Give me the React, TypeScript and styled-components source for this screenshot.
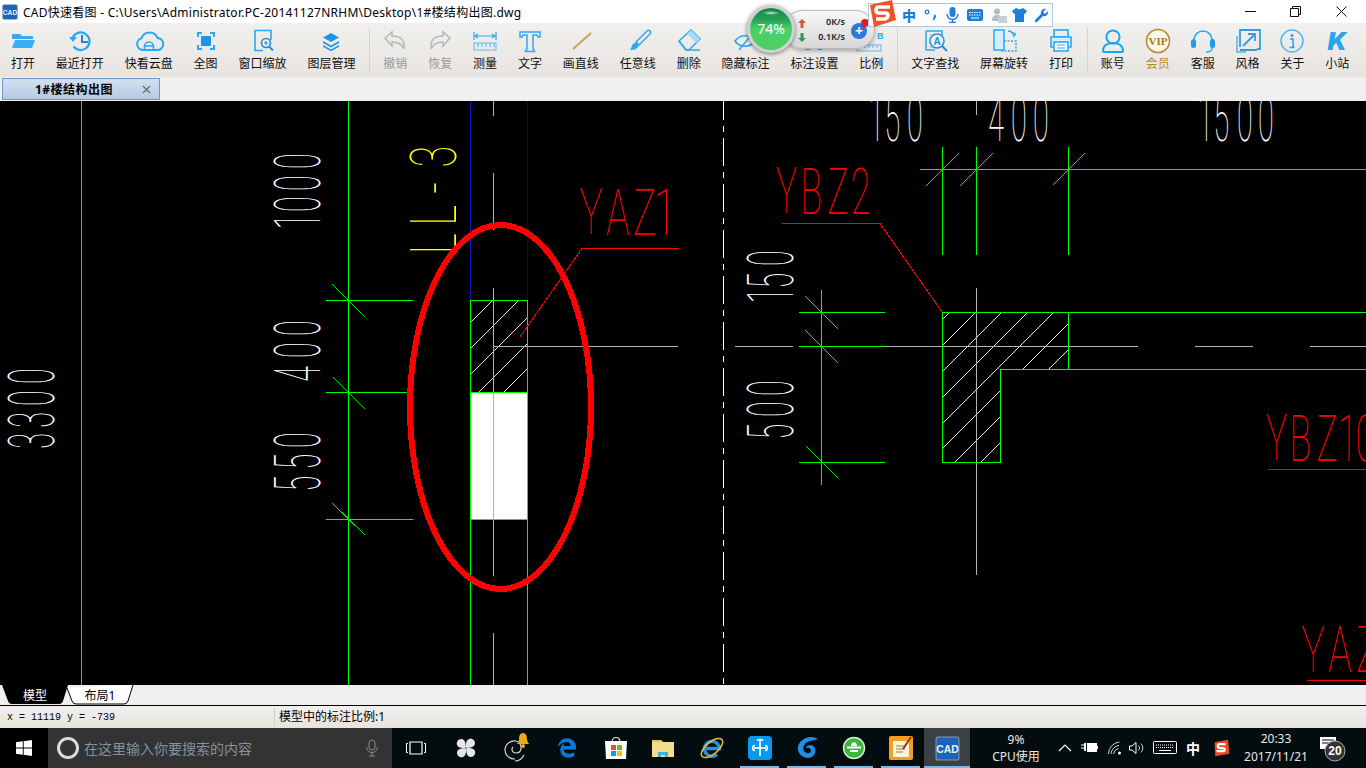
import React from 'react';
import styled, { createGlobalStyle } from 'styled-components';
import { FaEdgeLegacy } from 'react-icons/fa6';

const CJK = `"Noto Sans", "Noto Sans CJK SC", sans-serif`;
const BLUE = '#2aa8f2';

const Global = createGlobalStyle`
  html, body { margin: 0; padding: 0; overflow: hidden; background: #000; }
  #root { width: 1366px; height: 768px; }
  * { box-sizing: border-box; }
`;

const Page = styled.div`
  position: relative;
  width: 1366px;
  height: 768px;
  display: flex;
  flex-direction: column;
  font-family: ${CJK};
  font-size: 12px;
  color: #000;
  overflow: hidden;
`;

const TitleBar = styled.header`
  height: 23px;
  background: #fff;
  display: flex;
  align-items: center;
  padding-left: 2px;
  flex: none;
`;
const TitleText = styled.span`
  margin-left: 5px;
  flex: 1;
  font-size: 12px;
  letter-spacing: 0.26px;
  white-space: nowrap;
`;
const WinButton = styled.div`
  width: 45.5px;
  height: 23px;
  display: flex;
  align-items: center;
  justify-content: center;
`;
const WinButtons = styled.div`
  display: flex;
  padding-right: 2px;
`;

const Toolbar = styled.nav`
  height: 54px;
  flex: none;
  display: flex;
  padding-left: 0.5px;
  background: linear-gradient(#f1f0ee, #e8e4e0);
`;
const Tool = styled.div`
  padding: 3px 10.44px 0;
  display: flex;
  flex-direction: column;
  align-items: center;
  flex: none;
`;
const ToolIcon = styled.svg`
  width: 30px;
  height: 30px;
  display: block;
  margin: 0 -6px;
  flex: none;
  overflow: visible;
`;
const ToolLabel = styled.span<{ $tone?: string }>`
  font-size: 12px;
  line-height: 16px;
  white-space: nowrap;
  color: ${p => p.$tone || '#111'};
`;
const ToolSep = styled.div`
  width: 1px;
  height: 44px;
  margin: 5px 2.5px 0 3.5px;
  background: #d5d3d1;
  flex: none;
`;

const TabBar = styled.div`
  height: 24px;
  flex: none;
  background: #f0f0f0;
  padding: 1px 0 0 2px;
`;
const DocTab = styled.div`
  width: 158px;
  height: 22px;
  border: 1px solid #6f98c8;
  background: linear-gradient(#d2e0f0, #b4cae4);
  display: flex;
  align-items: center;
  padding-left: 32px;
  position: relative;
`;
const DocTabLabel = styled.span`
  flex: 1;
  font-weight: 700;
  font-size: 12px;
  letter-spacing: 0.5px;
  color: #000;
`;
const DocTabClose = styled.svg`
  width: 9px;
  height: 9px;
  margin-right: 8px;
`;

const Canvas = styled.svg`
  display: block;
  flex: none;
  width: 1366px;
  height: 584px;
  background: #000;
`;
const CadChars = styled.text`
  font-family: Roboto, "Liberation Sans", sans-serif;
  font-weight: 100;
  font-size: 64px;
`;

const LayoutStrip = styled.div`
  height: 21px;
  flex: none;
  background: #f0f0f0;
  border-bottom: 1px solid #000;
  display: flex;
  padding-left: 1px;
`;
const LayoutTab = styled.div<{ $active?: boolean; $w: number }>`
  position: relative;
  width: ${p => p.$w}px;
  height: 20px;
  margin-right: -3px;
  display: flex;
  align-items: center;
  justify-content: center;
  font-size: 12px;
  color: ${p => (p.$active ? '#fff' : '#000')};
`;
const LayoutShape = styled.svg`
  position: absolute;
  inset: 0;
  width: 100%;
  height: 100%;
`;
const LayoutTabText = styled.span`
  position: relative;
`;

const StatusBar = styled.footer`
  height: 22px;
  flex: none;
  display: flex;
  align-items: center;
  background: linear-gradient(#f1f0ee, #e8e4e0);
`;
const Coords = styled.span`
  width: 274px;
  padding-left: 7px;
  font-family: "Liberation Mono", monospace;
  font-size: 10px;
`;
const StatusNote = styled.span`
  height: 18px;
  line-height: 18px;
  padding-left: 4px;
  border-left: 1px solid #d0cecc;
  font-size: 12px;
`;

const Taskbar = styled.div`
  height: 40px;
  flex: none;
  display: flex;
  align-items: stretch;
  background: #030c0f;
  color: #fff;
`;
const Start = styled.div`
  width: 48px;
  background: #000;
  display: flex;
  align-items: center;
  justify-content: center;
`;
const SearchBox = styled.div`
  width: 344px;
  background: #333;
  display: flex;
  align-items: center;
  padding-left: 9px;
`;
const CortanaRing = styled.div`
  width: 22px;
  height: 22px;
  border-radius: 50%;
  border: 3px solid #dcdcdc;
  margin-right: 5px;
  flex: none;
`;
const SearchHint = styled.span`
  flex: 1;
  font-size: 14px;
  color: #84929c;
`;
const TaskItem = styled.div<{ $w: number; $run?: boolean; $active?: boolean }>`
  position: relative;
  width: ${p => p.$w}px;
  flex: none;
  display: flex;
  align-items: center;
  justify-content: center;
  background: ${p => (p.$active ? '#3a4043' : 'transparent')};
  &::after {
    content: '';
    display: ${p => (p.$run ? 'block' : 'none')};
    position: absolute;
    left: ${p => (p.$active ? 0 : 4)}px;
    right: ${p => (p.$active ? 0 : 4)}px;
    bottom: 0;
    height: 2px;
    background: #76b9ed;
  }
`;
const TaskSvg = styled.svg<{ $size?: number }>`
  width: ${p => p.$size || 28}px;
  height: ${p => p.$size || 28}px;
  display: block;
`;
const CpuBlock = styled.div`
  width: 83px;
  padding-left: 9px;
  text-align: center;
  font-size: 12px;
  line-height: 17px;
  padding-top: 3px;
  color: #e8e8e8;
  flex: none;
`;
const TrayCell = styled.div<{ $w: number }>`
  width: ${p => p.$w}px;
  flex: none;
  display: flex;
  align-items: center;
  justify-content: center;
  font-size: 14px;
  font-weight: 700;
`;
const Clock = styled.div`
  width: 74px;
  flex: none;
  text-align: center;
  font-size: 12px;
  line-height: 18px;
  padding-top: 2px;
  color: #e8e8e8;
  white-space: nowrap;
`;

const NetWidget = styled.div`
  position: absolute;
  left: 747px;
  top: 5px;
  width: 128px;
  height: 48px;
`;
const NetPill = styled.div`
  position: absolute;
  left: 36px;
  top: 5px;
  width: 92px;
  height: 39px;
  border-radius: 20px;
  background: linear-gradient(#f8f8f8, #d6d6d6);
  border: 1px solid #b8b8b8;
  box-shadow: 0 2px 4px rgba(0, 0, 0, 0.3);
`;
const NetRate = styled.span<{ $y: number }>`
  position: absolute;
  right: 29px;
  top: ${p => p.$y}px;
  font-size: 9px;
  line-height: 12px;
  font-weight: 600;
  color: #222;
  white-space: nowrap;
`;
const NetArrow = styled.svg<{ $y: number }>`
  position: absolute;
  left: 14px;
  top: ${p => p.$y}px;
  width: 8px;
  height: 9px;
`;
const NetPlus = styled.div`
  position: absolute;
  right: 7px;
  top: 12px;
  width: 16px;
  height: 16px;
  border-radius: 50%;
  background: #2f78d8;
  color: #fff;
  font-size: 14px;
  font-weight: 700;
  line-height: 15px;
  text-align: center;
`;
const NetDot = styled.div`
  position: absolute;
  right: 5px;
  top: 8px;
  width: 8px;
  height: 8px;
  border-radius: 50%;
  background: #d5222c;
`;
const NetGauge = styled.div`
  position: absolute;
  left: 0;
  top: 0;
  width: 48px;
  height: 48px;
  border-radius: 50%;
  background: #e8e8e8;
  border: 3px solid #cfd2d0;
  box-shadow: 0 1px 4px rgba(0, 0, 0, 0.5);
  display: flex;
  align-items: center;
  justify-content: center;
`;
const GaugeFace = styled.div`
  width: 42px;
  height: 42px;
  border-radius: 50%;
  background: radial-gradient(ellipse 9px 2px at 50% 5px, #cfe8da 0%, transparent 100%),
    linear-gradient(#17834a 0%, #25a257 28%, #4bd067 50%, #4ccf62 100%);
  color: #fff;
  font-size: 14px;
  line-height: 42px;
  text-align: center;
`;

const SogouBar = styled.div`
  position: absolute;
  left: 868px;
  top: 3px;
  width: 185px;
  height: 24px;
  background: #fbfcfe;
  border: 1px solid #b4c8dc;
  display: flex;
  align-items: center;
  padding-left: 31px;
`;
const SogouCell = styled.div<{ $w: number }>`
  width: ${p => p.$w}px;
  flex: none;
  display: flex;
  align-items: center;
  justify-content: center;
  font-size: 14px;
  font-weight: 900;
  color: #1f7fd6;
`;
const SogouLogo = styled.svg`
  position: absolute;
  left: 868px;
  top: 0;
  width: 28px;
  height: 28px;
`;

type L = [number, number, number, number];
const GREEN = '#00ff00';
const GREY = '#b4b4b4';

const greenLines: L[] = [
  [81.5, 101, 81.5, 685], [348.5, 101, 348.5, 685],
  [326, 300.5, 413, 300.5], [326, 392.5, 410, 392.5], [326, 519.5, 413, 519.5],
  [470.5, 300, 470.5, 685], [527.5, 300, 527.5, 685],
  [470, 300.5, 528, 300.5], [470, 392.5, 528, 392.5], [470, 519.5, 528, 519.5],
  [920, 169.5, 1366, 169.5], [942.5, 147, 942.5, 255], [976.5, 147, 976.5, 255], [1068.5, 147, 1068.5, 255],
  [942, 312.5, 1366, 312.5], [1000, 369.5, 1366, 369.5], [942.5, 312, 942.5, 463],
  [1068.5, 312, 1068.5, 370], [1000.5, 369, 1000.5, 463], [942, 462.5, 1001, 462.5],
  [821.5, 290, 821.5, 485], [799, 312.5, 885, 312.5], [799, 346.5, 885, 346.5], [799, 462.5, 885, 462.5],
];
const greenTicks: L[] = [
  [332, 284, 365, 317], [333, 377, 365, 409], [332, 503, 365, 535],
  [959, 153, 926, 186], [993, 153, 960, 186], [1085, 153, 1053, 185],
  [805, 296, 838, 329], [805, 330, 838, 363], [806, 446, 838, 478],
];
const hatch: L[] = [
  [492, 301, 471, 322], [518, 301, 471, 348], [527, 318, 471, 374], [527, 344, 479, 392], [527, 369, 504, 392],
  [949, 313, 943, 319], [975, 313, 943, 345], [1001, 313, 943, 371], [1027, 313, 943, 397], [1053, 313, 943, 423],
  [1068, 324, 1023, 369], [1068, 350, 1049, 369],
  [1000, 391, 943, 448], [1000, 417, 955, 462], [1000, 443, 981, 462],
];
const greyLines: L[] = [
  [493.5, 101, 493.5, 116], [493.5, 173, 493.5, 230], [493.5, 288, 493.5, 576], [493.5, 633, 493.5, 685],
  [493, 346.5, 678, 346.5],
  [976.5, 101, 976.5, 115], [976.5, 288, 976.5, 575],
  [735, 346.5, 793, 346.5], [885, 346.5, 1138, 346.5], [1195, 346.5, 1253, 346.5], [1310, 346.5, 1366, 346.5],
];
const redLines: L[] = [
  [582, 248.5, 679, 248.5], [582, 248.5, 520, 337],
  [782, 223.5, 880, 223.5], [880, 223.5, 942, 312],
  [1268, 469.5, 1366, 469.5], [1307, 680.5, 1366, 680.5],
];

const bearEm: Record<string, number> = { Y: 0.01, A: 0.02, Z: 0.05, B: 0.1, L: 0.1, '1': 0.12, '2': 0.06, '3': 0.06, '0': 0.07, '4': 0.03, '5': 0.09, '-': 0.02 };

function CadText({ text, x, y, at, color = '#fff', up, sx = 0.45 }: { text: string; x: number; y: number; at: number[]; color?: string; up?: boolean; sx?: number }) {
  const xs = at.map((v, i) => v / sx - (bearEm[text[i]] || 0) * 64);
  return (
    <CadChars
      fill={color}
      transform={`translate(${x} ${y}) rotate(${up ? -90 : 0.01}) scale(${sx} 1)`}
      x={xs.join(' ')}
      y="0"
    >
      {text}
    </CadChars>
  );
}

function Lines({ data, color, width = 1 }: { data: L[]; color: string; width?: number }) {
  return (
    <g stroke={color} strokeWidth={width}>
      {data.map((l, i) => <line key={i} x1={l[0]} y1={l[1]} x2={l[2]} y2={l[3]} />)}
    </g>
  );
}

function Drawing() {
  return (
    <Canvas viewBox="0 101 1366 584" shapeRendering="crispEdges">
      <rect x="471" y="393" width="56" height="126" fill="#fff" />
      <line x1="470.5" y1="101" x2="470.5" y2="300" stroke="#1212c8" />
      <line x1="527.5" y1="101" x2="527.5" y2="300" stroke="#000090" />
      <Lines data={hatch} color="#e8e8e8" />
      <Lines data={greyLines} color={GREY} />
      <Lines data={greenLines} color={GREEN} />
      <Lines data={greenTicks} color="#00e000" />
      <Lines data={redLines} color="#ff0000" />
      <line x1="723.5" y1="92" x2="723.5" y2="685" stroke="#fff" strokeDasharray="28 6 6 6" />

      <CadText up text="1000" x={320} y={226} at={[0, 16, 37, 59]} />
      <CadText up text="400" x={320} y={381} at={[0, 25, 47]} />
      <CadText up text="550" x={320} y={489} at={[0, 22, 43]} />
      <CadText up text="3300" x={54} y={447} at={[0, 21, 43, 65]} />
      <CadText up text="150" x={793} y={300} at={[0, 14, 36]} />
      <CadText up text="500" x={793} y={437} at={[0, 22, 43]} />
      <CadText text="150" x={872} y={141} at={[0, 15, 37]} />
      <CadText text="400" x={989} y={141} at={[0, 24, 46]} />
      <CadText text="1500" x={1201} y={141} at={[0, 15, 38, 59]} />
      <CadText up sx={0.62} color="#ffff00" text="LL-3" x={456} y={250} at={[0, 28.5, 57, 85]} />
      <CadText sx={0.62} color="#ff0000" text="YAZ1" x={580} y={234.5} at={[0, 27, 55, 79]} />
      <CadText sx={0.56} color="#ff0000" text="YBZ2" x={776} y={213.5} at={[0, 28, 53, 77]} />
      <CadText sx={0.56} color="#ff0000" text="YBZ10" x={1266} y={460.5} at={[0, 27, 52, 76, 92]} />
      <CadText sx={0.62} color="#ff0000" text="YAZ" x={1302} y={672} at={[0, 27, 56]} />

      <ellipse cx="500.5" cy="407" rx="90.5" ry="182" fill="none" stroke="#ff0000" strokeWidth="6" />
    </Canvas>
  );
}

const icons: Record<string, React.ReactNode> = {
  open: <><path d="M4 9a1 1 0 0 1 1-1h7l2 2h10a1 1 0 0 1 1 1v2H4z" fill="#3ea6ec" /><path d="M4 22l3-8h20l-3 8z" fill="#35aff5" /></>,
  recent: <><path d="M8 11a8.8 8.8 0 1 1 .6 9.5" fill="none" stroke={BLUE} strokeWidth="2.2" /><path d="M4 11h8l-4 5z" fill={BLUE} /><path d="M17 9v7h6" fill="none" stroke="#1e88cf" strokeWidth="2" /></>,
  cloud: <><path d="M9 24a6 6 0 0 1-1.400-11.800A8.500 8.500 0 0 1 23.500 12a6 6 0 0 1-.5 12z" fill="none" stroke={BLUE} strokeWidth="2" /><path d="M10.500 23v-2.500a4.500 4.500 0 0 1 9 0V23M11 20h8" fill="none" stroke={BLUE} strokeWidth="1.700" /></>,
  fit: <><path d="M7 11V7h4M19 7h4v4M23 19v4h-4M11 23H7v-4" fill="none" stroke={BLUE} strokeWidth="2" /><rect x="10" y="10" width="10" height="10" rx="1" fill="#1a96ec" /></>,
  zoom: <><path d="M23 14V4.500H7V24.500h8" fill="none" stroke={BLUE} strokeWidth="1.600" /><circle cx="18" cy="17" r="4.500" fill="none" stroke="#1e8fd6" strokeWidth="1.600" /><path d="M16 17h4M18 15v4" stroke="#1e8fd6" /><path d="M21 20.500l4 4" stroke="#1e8fd6" strokeWidth="2" /></>,
  layers: <><path d="M15 7l8 4.500-8 4.500-8-4.500z" fill="#1a96ec" /><path d="M7 15l8 4.500 8-4.500v2l-8 4.500-8-4.500z" fill="#1a96ec" /><path d="M7 19l8 4.500 8-4.500v1.800l-8 4.500-8-4.500z" fill="#1a96ec" /></>,
  undo: <path d="M5 12l7-6v4c8 0 13 3 12 13-2-5-6-7-12-7v4z" fill="none" stroke="#b8b8b8" strokeWidth="1.500" />,
  redo: <path d="M25 12l-7-6v4c-8 0-13 3-12 13 2-5 6-7 12-7v4z" fill="none" stroke="#b8b8b8" strokeWidth="1.500" />,
  measure: <><path d="M4 6v8M26 6v8M5 10h20M8 8l-3 2 3 2M22 8l3 2-3 2" fill="none" stroke={BLUE} strokeWidth="1.200" /><path d="M4 17h22v7H4zM8 17v4M12 17v4M16 17v4M20 17v4M24 17v4" fill="none" stroke="#5cbcf2" strokeWidth="1.100" /></>,
  text: <path d="M5 6h20v5h-2l-1-2h-4v14l1.500 1.500v1h-9v-1L12 23V9H8l-1 2H5z" fill="none" stroke={BLUE} strokeWidth="1.500" />,
  line: <path d="M7 23L25 7" stroke="#c8a65a" strokeWidth="2.200" />,
  brush: <><path d="M13 16L24 5a2 2 0 0 1 3 3L16 19z" fill="none" stroke={BLUE} strokeWidth="1.500" /><path d="M12 17c3 0 4 2 3 4-2 3-6 3-8 3 2-2 1-6 5-7z" fill="#2aa8f2" /></>,
  eraser: <><path d="M5 15L17 4l9 9-11 11h-3z" fill="none" stroke={BLUE} strokeWidth="1.500" /><path d="M13 8l9 9 4-4-9-9z" fill="#a9daf6" /><path d="M5 15l7 9M12 24h14" fill="none" stroke={BLUE} strokeWidth="1.500" /></>,
  eye: <><path d="M4 15c5-7 15-7 20 0-5 7-15 7-20 0z" fill="none" stroke={BLUE} strokeWidth="1.700" /><path d="M8 24L22 7" stroke={BLUE} strokeWidth="1.500" /></>,
  setting: <path d="M7 24h4v-2H7zM19 24h4v-2h-4z" fill={BLUE} />,
  ratio: <><path d="M1 19h24v6H1zM5 19v3M9 19v3M13 19v3M17 19v3M21 19v3" fill="none" stroke="#5cbcf2" strokeWidth="1.100" /><text x="21" y="13" fontSize="9" fontWeight="700" fontFamily="'Liberation Sans', sans-serif" fill="#2aa8f2">B</text></>,
  find: <><path d="M6 5h16v8M6 5v19h9" fill="none" stroke={BLUE} strokeWidth="1.500" /><path d="M9 9h4M9 13h2M9 17h2M9 21h4" stroke="#7ccbf5" /><circle cx="17" cy="15" r="7" fill="#e9f6fe" stroke="#1e8fd6" strokeWidth="1.500" /><text x="17" y="19" textAnchor="middle" fontSize="10" fontWeight="700" fontFamily="'Liberation Sans', sans-serif" fill="#1e8fd6">A</text><path d="M22 20l5 5" stroke="#1e8fd6" strokeWidth="2" /></>,
  rotate: <><rect x="5" y="4" width="10" height="20" fill="#d6eefc" stroke={BLUE} strokeWidth="1.500" /><path d="M15 15h12v10H12v-1" fill="none" stroke={BLUE} strokeWidth="1.500" strokeDasharray="2 1.500" /><path d="M19 5c3 0 5 2 6 5M24 6l1 4 2-3" fill="none" stroke={BLUE} strokeWidth="1.400" /></>,
  print: <><rect x="8" y="4" width="14" height="7" fill="none" stroke={BLUE} strokeWidth="1.600" /><path d="M8 21H5V11h20v10h-3" fill="#d6eefc" stroke={BLUE} strokeWidth="1.600" /><rect x="8" y="16" width="14" height="9" fill="#fff" stroke={BLUE} strokeWidth="1.600" /><path d="M11 19h8M11 22h8" stroke={BLUE} /></>,
  user: <><circle cx="15" cy="11" r="6.600" fill="none" stroke="#12a8f8" strokeWidth="2" /><path d="M5 25c0-5 4-8 10-8s10 3 10 8c0 1-1 1-2 1H7c-1 0-2 0-2-1z" fill="none" stroke="#12a8f8" strokeWidth="2" /></>,
  headset: <><path d="M6 17v-3a9 9 0 0 1 18 0v3" fill="none" stroke="#2aa8f2" strokeWidth="1.600" /><rect x="3" y="13" width="5" height="9" rx="2.500" fill="#1f9be8" /><rect x="22" y="13" width="5" height="9" rx="2.500" fill="#1f9be8" /><path d="M24 22c0 3-3 4-6 4" fill="none" stroke="#2aa8f2" strokeWidth="1.400" /></>,
  style: <><path d="M13 26H4V10" fill="none" stroke="#59b6ea" strokeWidth="1.600" /><path d="M7 7V4h20v19h-3M7 7v14M7 24h17" fill="none" stroke="#2f9fe0" strokeWidth="1.800" /><path d="M10 20L22 8M15 8h7v7" fill="none" stroke="#2f9fe0" strokeWidth="1.800" /></>,
  info: <><circle cx="15" cy="15" r="11" fill="none" stroke="#4eb8f0" strokeWidth="1.500" /><circle cx="15" cy="9.500" r="1.500" fill="#2b9fe2" /><path d="M13 13h3v8h1.500M12.500 21.500h5" fill="none" stroke="#2b9fe2" strokeWidth="1.500" /></>,
};

function Svg({ name }: { name: string }) {
  return <ToolIcon viewBox="0 0 30 30">{icons[name]}</ToolIcon>;
}

const vip = (
  <ToolIcon viewBox="0 0 30 30">
    <circle cx="15" cy="15" r="11.500" fill="#fff8e8" stroke="#b98a38" strokeWidth="1.600" />
    <text x="15" y="19" textAnchor="middle" fontFamily="'Liberation Serif', serif" fontWeight="700" fontSize="11" fill="#a97a24">VIP</text>
  </ToolIcon>
);
const kSite = (
  <ToolIcon viewBox="0 0 30 30">
    <text x="15" y="24" textAnchor="middle" fontFamily="Inter, 'Liberation Sans', sans-serif" fontStyle="italic" fontWeight="900" fontSize="25" fill="#29a6e8">K</text>
  </ToolIcon>
);

type ToolDef = { label: string; icon?: string; node?: React.ReactNode; tone?: string } | 'sep';
const tools: ToolDef[] = [
  { label: '打开', icon: 'open' }, { label: '最近打开', icon: 'recent' }, { label: '快看云盘', icon: 'cloud' },
  { label: '全图', icon: 'fit' }, { label: '窗口缩放', icon: 'zoom' }, { label: '图层管理', icon: 'layers' }, 'sep',
  { label: '撤销', icon: 'undo', tone: '#999' }, { label: '恢复', icon: 'redo', tone: '#999' },
  { label: '测量', icon: 'measure' }, { label: '文字', icon: 'text' }, { label: '画直线', icon: 'line' },
  { label: '任意线', icon: 'brush' }, { label: '删除', icon: 'eraser' }, { label: '隐藏标注', icon: 'eye' },
  { label: '标注设置', icon: 'setting' }, { label: '比例', icon: 'ratio' }, 'sep',
  { label: '文字查找', icon: 'find' }, { label: '屏幕旋转', icon: 'rotate' }, { label: '打印', icon: 'print' }, 'sep',
  { label: '账号', icon: 'user' }, { label: '会员', node: vip, tone: '#b8862d' }, { label: '客服', icon: 'headset' },
  { label: '风格', icon: 'style' }, { label: '关于', icon: 'info' }, { label: '小站', node: kSite },
];

const CadBadge = ({ size }: { size: number }) => (
  <svg width={size} height={size} viewBox="0 0 24 24">
    <rect x="1" y="1" width="22" height="22" rx="2" fill="#1c64b8" stroke="#8a9ab0" />
    <text x="12" y="16" textAnchor="middle" fontFamily="'Liberation Sans', sans-serif" fontWeight="700" fontSize="10" fill="#e8f2ff">CAD</text>
  </svg>
);

const petal = 'M14 13.500C13.500 9 13.500 4 8.500 3.500 4.500 3.500 2.500 7.500 3.500 10.500c1 3 6 4.500 10.500 3z';

const task: { w: number; run?: boolean; active?: boolean; node: React.ReactNode }[] = [
  { w: 48, node: <TaskSvg viewBox="0 0 28 28"><path d="M8 8h12v12H8z" fill="none" stroke="#fff" strokeWidth="1.200" /><path d="M6 9.500H4.500v9H6M22 9.500h1.500v9H22" fill="none" stroke="#fff" /></TaskSvg> },
  { w: 51, node: <TaskSvg $size={24} viewBox="0 0 28 28"><g fill="#e6e6e6">{[0, 90, 180, 270].map(r => <path key={r} d={petal} transform={`rotate(${r} 14 14)`} />)}</g></TaskSvg> },
  { w: 50, node: <TaskSvg $size={36} viewBox="0 0 36 36"><path d="M17 29c-6 0-10-4-10-9 0-6 6-10 11-9 4 1 5 4 5 7 0 4-3 5-5 5-4 0-5-4-3-6M26 25c-2 4-5 6-9 6" fill="none" stroke="#d6d6d6" strokeWidth="1.200" /><path d="M25 3c3 0 4 3 4 6 0 3 2 5 3 5H18c1 0 3-2 3-5 0-3 1-6 4-6z" fill="#e8a818" /><circle cx="25" cy="16" r="2" fill="#e8a818" /></TaskSvg> },
  { w: 51, node: <FaEdgeLegacy size={20} color="#0a78d7" /> },
  { w: 47, node: <TaskSvg viewBox="0 0 28 28"><path d="M10 8c0-6 8-6 8 0" fill="none" stroke="#e6e6e6" strokeWidth="1.200" /><path d="M3 7h22l-1 18H4z" fill="#fff" /><rect x="9" y="11" width="5" height="5" fill="#f25022" /><rect x="15" y="11" width="5" height="5" fill="#7fba00" /><rect x="9" y="17" width="5" height="5" fill="#00a4ef" /><rect x="15" y="17" width="5" height="5" fill="#ffb900" /></TaskSvg> },
  { w: 48, node: <TaskSvg viewBox="0 0 28 28"><path d="M3 6h9l2 2h11v15H3z" fill="#f6dc8e" /><path d="M3 6h9v2H3z" fill="#e9c25c" /><path d="M9 23v-5h10v5h-3v-2h-4v2z" fill="#3eaee6" /></TaskSvg> },
  { w: 49, node: <TaskSvg viewBox="0 0 28 28"><path d="M7 14.500h14.500a7.500 7.500 0 1 0-2.500 6" fill="none" stroke="#2b8fdd" strokeWidth="3.400" /><ellipse cx="14" cy="14" rx="13" ry="6" transform="rotate(-40 14 14)" fill="none" stroke="#e8c23a" strokeWidth="1.500" /></TaskSvg> },
  { w: 47, run: true, node: <TaskSvg viewBox="0 0 28 28"><rect x="2" y="2" width="24" height="24" rx="4" fill="#0a98ee" /><path d="M14 6v16M8 14h12M9 11.500c-3 0-3 5 0 5M19 11.500c3 0 3 5 0 5M11.500 7c0-2 5-2 5 0" fill="none" stroke="#fff" strokeWidth="1.700" /></TaskSvg> },
  { w: 47, run: true, node: <TaskSvg viewBox="0 0 28 28"><path d="M25 5c-3-2-8-3-12-1C6 7 3 13 6 19c3 5 11 7 15 2 3-4 1-9-3-10-3 0-5 1-5 3 2-1 5 0 5 3 0 3-5 3-7 0-2-4 1-9 6-10 3-1 6-1 8-2z" fill="#1f8fe6" /></TaskSvg> },
  { w: 47, run: true, node: <TaskSvg viewBox="0 0 28 28"><circle cx="14" cy="14" r="10.500" fill="#3fb53f" stroke="#d8f0d8" strokeWidth="1.400" /><path d="M7 13.500h14M10 17h8" stroke="#fff" strokeWidth="2" /><path d="M11 12c0-5 6-5 6 0z" fill="#fff" /></TaskSvg> },
  { w: 47, run: true, node: <TaskSvg viewBox="0 0 28 28"><rect x="2" y="2" width="24" height="24" rx="2" fill="#f0a020" /><rect x="6" y="7" width="16" height="16" fill="#fbf2dc" /><path d="M9 12h9M9 15h9M9 18h7" stroke="#9a7a40" /><path d="M16 15L24 3" stroke="#8c3a14" strokeWidth="2" /></TaskSvg> },
  { w: 46, run: true, active: true, node: <CadBadge size={25} /> },
];

export default function App() {
  return (
    <Page>
      <Global />
      <TitleBar>
        <CadBadge size={16} />
        <TitleText>CAD快速看图 - C:\Users\Administrator.PC-20141127NRHM\Desktop\1#楼结构出图.dwg</TitleText>
        <WinButtons>
          <WinButton><svg width="11" height="11"><path d="M0 5.500h11" stroke="#111" /></svg></WinButton>
          <WinButton><svg width="11" height="11"><path d="M0.500 2.500h8v8h-8zM2.500 2.500v-2h8v8h-2" fill="none" stroke="#111" /></svg></WinButton>
          <WinButton><svg width="11" height="11"><path d="M0.500 0.500l10 10M10.500 0.500l-10 10" stroke="#111" /></svg></WinButton>
        </WinButtons>
      </TitleBar>

      <Toolbar>
        {tools.map((t, i) =>
          t === 'sep' ? <ToolSep key={i} /> : (
            <Tool key={t.label}>
              {t.node || <Svg name={t.icon as string} />}
              <ToolLabel $tone={t.tone}>{t.label}</ToolLabel>
            </Tool>
          ),
        )}
      </Toolbar>

      <TabBar>
        <DocTab>
          <DocTabLabel>1#楼结构出图</DocTabLabel>
          <DocTabClose viewBox="0 0 9 9"><path d="M1 1l7 7M8 1l-7 7" stroke="#666" strokeWidth="1.100" /></DocTabClose>
        </DocTab>
      </TabBar>

      <Drawing />

      <LayoutStrip>
        <LayoutTab $active $w={68}>
          <LayoutShape viewBox="0 0 68 20"><path d="M1 0L7 16q1 3 4 3H58q3 0 4-3L67 0z" fill="#000" /></LayoutShape>
          <LayoutTabText>模型</LayoutTabText>
        </LayoutTab>
        <LayoutTab $w={68}>
          <LayoutShape viewBox="0 0 68 20"><path d="M1 3L6 16q1 3 4 3H58q3 0 4-3L67 0" fill="#fff" stroke="#000" /></LayoutShape>
          <LayoutTabText>布局1</LayoutTabText>
        </LayoutTab>
      </LayoutStrip>

      <StatusBar>
        <Coords>x = 11119 y = -739</Coords>
        <StatusNote>模型中的标注比例:1</StatusNote>
      </StatusBar>

      <Taskbar>
        <Start>
          <svg width="16" height="16" viewBox="0 0 16 16"><path d="M0 2.300L6.800 1.300V7.500H0zM7.700 1.200L16 0V7.500H7.700zM0 8.400H6.800V14.700L0 13.700zM7.700 8.400H16V16L7.700 14.800z" fill="#fff" /></svg>
        </Start>
        <SearchBox>
          <CortanaRing />
          <SearchHint>在这里输入你要搜索的内容</SearchHint>
          <TaskItem $w={40}>
            <svg width="14" height="18" viewBox="0 0 14 18"><rect x="4" y="1" width="6" height="10" rx="3" fill="none" stroke="#8a8a8a" /><path d="M1.500 8a5.500 5.500 0 0 0 11 0M7 14v3M4 17h6" fill="none" stroke="#8a8a8a" /></svg>
          </TaskItem>
        </SearchBox>
        {task.map((t, i) => <TaskItem key={i} $w={t.w} $run={t.run} $active={t.active}>{t.node}</TaskItem>)}
        <CpuBlock>9%<br />CPU使用</CpuBlock>
        <TrayCell $w={24}><svg width="14" height="8"><path d="M1 7l6-6 6 6" fill="none" stroke="#fff" strokeWidth="1.200" /></svg></TrayCell>
        <TrayCell $w={26}><svg width="18" height="12"><path d="M0 3h3M0 6h3" stroke="#fff" /><path d="M3 1h2v8H3z" fill="#fff" /><rect x="6.500" y="1.500" width="9" height="8" fill="#fff" stroke="#fff" /><path d="M16.500 4v3" stroke="#fff" /></svg></TrayCell>
        <TrayCell $w={24}><svg width="14" height="14"><path d="M0.500 13a12 12 0 0 1 11-12M3 13a9 9 0 0 1 8-8.500M5.500 13a6.500 6.500 0 0 1 5-5.500" fill="none" stroke="#cfcfcf" /><circle cx="11.500" cy="12" r="1.500" fill="#fff" /></svg></TrayCell>
        <TrayCell $w={20}><svg width="16" height="14"><path d="M0.500 5H3l4-3.500v11L3 9H0.500z" fill="none" stroke="#fff" /><path d="M9.500 4.500a3.500 3.500 0 0 1 0 5M12 2.500a6.500 6.500 0 0 1 0 9" fill="none" stroke="#ccc" /></svg></TrayCell>
        <TrayCell $w={36}><svg width="24" height="14"><rect x="0.500" y="0.500" width="23" height="12" rx="1" fill="none" stroke="#fff" /><path d="M3 4h18M3 6.500h18" stroke="#fff" strokeDasharray="1 1" /><path d="M6 9.500h12" stroke="#fff" /></svg></TrayCell>
        <TrayCell $w={20}>中</TrayCell>
        <TrayCell $w={36}><svg width="18" height="18" viewBox="0 0 28 28"><path d="M4 5L25 1l2 22-22 4z" fill="#ec4b22" /><path d="M21 8H12q-3 0-3 3t3 3h5q3 0 3 2.500T17 19H7" fill="none" stroke="#fff" strokeWidth="3.500" /></svg></TrayCell>
        <Clock>20:33<br />2017/11/21</Clock>
        <TrayCell $w={40}>
          <svg width="28" height="28" viewBox="0 0 28 28">
            <path d="M1 3h16v12H1z" fill="#fff" /><path d="M3 6h12M3 9h12" stroke="#030c0f" />
            <circle cx="16" cy="17" r="10" fill="#333" stroke="#aaa" />
            <text x="16" y="21" textAnchor="middle" fontSize="12" fontWeight="700" fill="#fff" fontFamily="'Liberation Sans', sans-serif">20</text>
          </svg>
        </TrayCell>
      </Taskbar>

      <NetWidget>
        <NetPill>
          <NetArrow $y={8} viewBox="0 0 8 9"><path d="M4 0l4 4H5.500v5h-3V4H0z" fill="#e0533c" /></NetArrow>
          <NetRate $y={5}>0K/s</NetRate>
          <NetArrow $y={22} viewBox="0 0 8 9"><path d="M4 9L0 5h2.500V0h3v5H8z" fill="#2f9b58" /></NetArrow>
          <NetRate $y={20}>0.1K/s</NetRate>
          <NetPlus>+</NetPlus>
          <NetDot />
        </NetPill>
        <NetGauge><GaugeFace>74%</GaugeFace></NetGauge>
      </NetWidget>

      <SogouBar>
        <SogouCell $w={18}>中</SogouCell>
        <SogouCell $w={26}><svg width="14" height="12"><circle cx="3" cy="3" r="1.800" fill="none" stroke="#1f7fd6" strokeWidth="1.300" /><path d="M10 6q2 0 1 3l-2 2" fill="#1f7fd6" stroke="#1f7fd6" strokeWidth="1.200" /></svg></SogouCell>
        <SogouCell $w={16}><svg width="13" height="16"><rect x="3.500" y="0" width="6" height="10" rx="3" fill="#1f7fd6" /><path d="M1 7a5.500 5.500 0 0 0 11 0M6.500 12.500V15M3 15.500h7" fill="none" stroke="#1f7fd6" strokeWidth="1.400" /></svg></SogouCell>
        <SogouCell $w={30}><svg width="16" height="12"><rect width="16" height="12" rx="2" fill="#1f7fd6" /><path d="M2 3.500h12M2 6h12" stroke="#fff" strokeDasharray="1.500 1" /><path d="M4 9h8" stroke="#fff" /></svg></SogouCell>
        <SogouCell $w={18}><svg width="16" height="15"><circle cx="6" cy="3.500" r="3" fill="#b4bcc6" /><path d="M1 13c0-5 2-6 5-6s5 1 5 6z" fill="#b4bcc6" /><rect x="7" y="8" width="9" height="7" fill="#c8ced6" /></svg></SogouCell>
        <SogouCell $w={22}><svg width="15" height="14"><path d="M4 0l3.500 1.500L11 0l4 3-2 3-1-.5V14H3V5.500L2 6 0 3z" fill="#1f7fd6" /></svg></SogouCell>
        <SogouCell $w={22}><svg width="15" height="15" viewBox="0 0 15 15"><path d="M14 3l-3 3-2-2 3-3a4 4 0 0 0-5 5L1 12a1.500 1.500 0 0 0 2 2l6-6a4 4 0 0 0 5-5z" fill="#1f7fd6" /></svg></SogouCell>
      </SogouBar>
      <SogouLogo viewBox="0 0 28 28">
        <path d="M2 5L24 0l4 20-22 7z" fill="#f0522a" />
        <path d="M22 7H11q-3 0-3 3t3 3h6q3 0 3 2.500T17 19H8" fill="none" stroke="#fff" strokeWidth="3.600" />
      </SogouLogo>
    </Page>
  );
}
